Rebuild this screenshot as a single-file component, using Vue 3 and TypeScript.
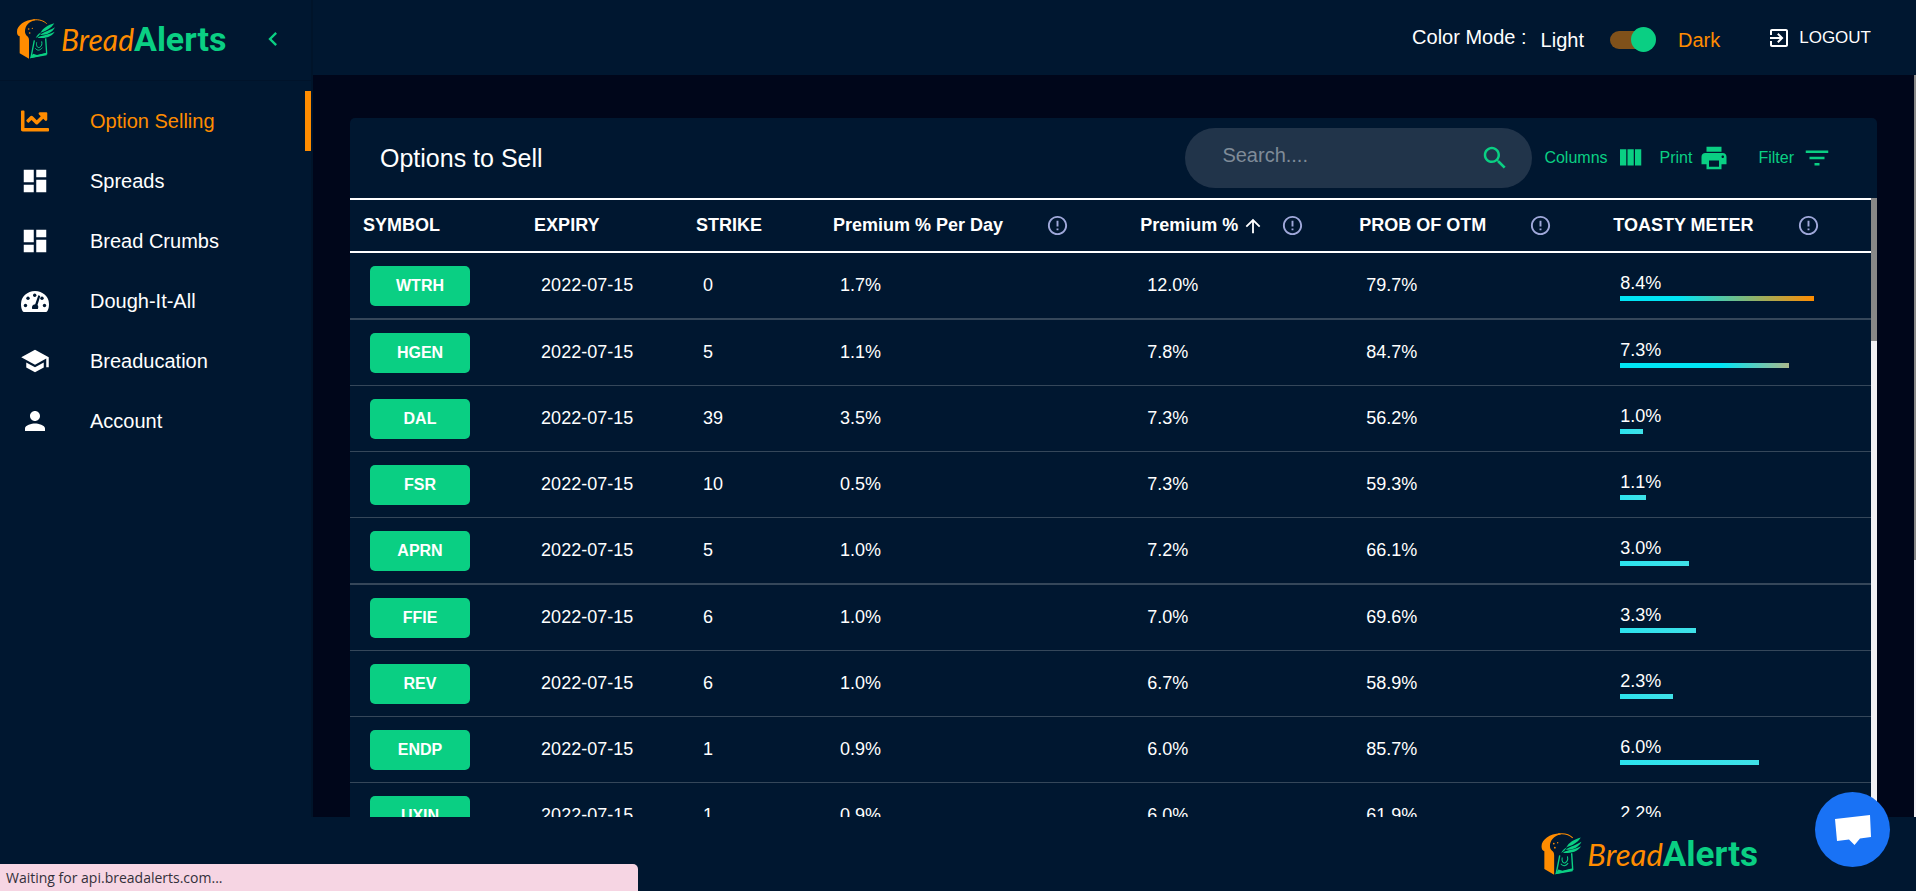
<script setup lang="ts">
import { ref, computed } from 'vue'

interface NavItem {
  label: string
  icon: 'chart' | 'dashboard' | 'gauge' | 'school' | 'person'
}

interface OptionRow {
  symbol: string
  expiry: string
  strike: number
  perDay: string
  premium: string
  prob: string
  meter: number
}

interface Column {
  key: string
  label: string
  info: boolean
  sorted?: boolean
}

const navItems: NavItem[] = [
  { label: 'Option Selling', icon: 'chart' },
  { label: 'Spreads', icon: 'dashboard' },
  { label: 'Bread Crumbs', icon: 'dashboard' },
  { label: 'Dough-It-All', icon: 'gauge' },
  { label: 'Breaducation', icon: 'school' },
  { label: 'Account', icon: 'person' },
]

const columns: Column[] = [
  { key: 'symbol', label: 'SYMBOL', info: false },
  { key: 'expiry', label: 'EXPIRY', info: false },
  { key: 'strike', label: 'STRIKE', info: false },
  { key: 'per-day', label: 'Premium % Per Day', info: true },
  { key: 'premium', label: 'Premium %', info: true, sorted: true },
  { key: 'prob', label: 'PROB OF OTM', info: true },
  { key: 'meter', label: 'TOASTY METER', info: true },
]

const rows: OptionRow[] = [
  { symbol: 'WTRH', expiry: '2022-07-15', strike: 0, perDay: '1.7%', premium: '12.0%', prob: '79.7%', meter: 8.4 },
  { symbol: 'HGEN', expiry: '2022-07-15', strike: 5, perDay: '1.1%', premium: '7.8%', prob: '84.7%', meter: 7.3 },
  { symbol: 'DAL', expiry: '2022-07-15', strike: 39, perDay: '3.5%', premium: '7.3%', prob: '56.2%', meter: 1.0 },
  { symbol: 'FSR', expiry: '2022-07-15', strike: 10, perDay: '0.5%', premium: '7.3%', prob: '59.3%', meter: 1.1 },
  { symbol: 'APRN', expiry: '2022-07-15', strike: 5, perDay: '1.0%', premium: '7.2%', prob: '66.1%', meter: 3.0 },
  { symbol: 'FFIE', expiry: '2022-07-15', strike: 6, perDay: '1.0%', premium: '7.0%', prob: '69.6%', meter: 3.3 },
  { symbol: 'REV', expiry: '2022-07-15', strike: 6, perDay: '1.0%', premium: '6.7%', prob: '58.9%', meter: 2.3 },
  { symbol: 'ENDP', expiry: '2022-07-15', strike: 1, perDay: '0.9%', premium: '6.0%', prob: '85.7%', meter: 6.0 },
  { symbol: 'UXIN', expiry: '2022-07-15', strike: 1, perDay: '0.9%', premium: '6.0%', prob: '61.9%', meter: 2.2 },
]

const active = ref('Option Selling')
const dark = ref(true)
const search = ref('')

const visibleRows = computed(() =>
  rows.filter((r) => r.symbol.toLowerCase().includes(search.value.trim().toLowerCase())),
)

function heat(value: number): string {
  if (value >= 8) return 'hot'
  if (value >= 7) return 'warm'
  return 'mild'
}
</script>

<template>
  <div class="app">
    <svg class="sprite" aria-hidden="true">
      <symbol id="loaf" viewBox="0 0 116 120">
        <path fill="#ff8c00" d="M54 1C24 2 1 20 1 38c0 8 2 12 8 14v51l28 16V64c0-7-2-10-6-13-4-4-6-8-6-14C25 22 36 7 56 4z" />
        <path fill="none" stroke="#ff8c00" stroke-width="3" d="M48 3c20-3 34 3 42 11" />
        <circle cx="36" cy="30" r="2.5" fill="#ff8c00" />
        <circle cx="47" cy="28" r="2" fill="#ff8c00" />
        <circle cx="39" cy="42" r="2.5" fill="#ff8c00" />
        <g fill="#0acf83">
          <path d="M113 13C94 18 78 28 72 41c16-5 31-12 41-28z" />
          <path d="M115 25C102 34 82 38 70 48c18 1 37-6 45-23z" />
          <path d="M114 38C102 45 86 47 74 51c-5 1-9 3-12 6 18 1 42-1 52-19z" />
          <path d="M74 40C67 44 61 49 57 57l9-6z" />
        </g>
        <path fill="none" stroke="#0acf83" stroke-width="4" d="M53 64 43 115l47-11-3-46" />
        <path fill="none" stroke="#0acf83" stroke-width="3" d="M60 70c-2 10 2 18 9 15 6-3 8-9 6-18M56 88c6 8 14 7 21-2" />
        <path fill="#0acf83" d="M40 118l9-14 12 4 29-7v8z" />
      </symbol>
      <symbol id="info" viewBox="0 0 24 24">
        <path d="M11 15h2v2h-2zm0-8h2v6h-2zm.99-5C6.47 2 2 6.48 2 12s4.47 10 9.99 10C17.52 22 22 17.52 22 12S17.52 2 11.99 2zM12 20c-4.42 0-8-3.58-8-8s3.58-8 8-8 8 3.58 8 8-3.58 8-8 8z" />
      </symbol>
      <symbol id="chart" viewBox="-18 -18 548 548">
        <path d="M496 384H64V80c0-8.84-7.16-16-16-16H16C7.16 64 0 71.16 0 80v336c0 17.67 14.33 32 32 32h464c8.84 0 16-7.16 16-16v-32c0-8.84-7.16-16-16-16zM464 96H345.94c-21.38 0-32.09 25.85-16.97 40.97l32.4 32.4L288 242.75l-73.37-73.37c-12.5-12.5-32.76-12.5-45.25 0l-68.69 68.69c-6.25 6.25-6.25 16.38 0 22.63l22.62 22.62c6.25 6.25 16.38 6.25 22.63 0L192 237.25l73.37 73.37c12.5 12.5 32.76 12.5 45.25 0l96-96 32.4 32.4c15.12 15.12 40.97 4.41 40.97-16.97V112c.01-8.84-7.15-16-15.99-16z" />
      </symbol>
      <symbol id="dashboard" viewBox="0 0 24 24">
        <path d="M3 13h8V3H3v10zm0 8h8v-6H3v6zm10 0h8V11h-8v10zm0-18v6h8V3h-8z" />
      </symbol>
      <symbol id="gauge" viewBox="0 0 30 30">
        <path d="M1 18a14 13 0 0 1 28 0c0 3-.5 5-1.6 7q-.5 1-1.5 1H4q-1 0-1.5-1C1.500 23 1 21 1 18z" />
        <g fill="#001730">
          <circle cx="5.500" cy="19.500" r="1.700" />
          <circle cx="8" cy="12.200" r="1.700" />
          <circle cx="14.700" cy="9.300" r="1.700" />
          <circle cx="22" cy="12.200" r="1.700" />
          <circle cx="24.500" cy="19.500" r="1.700" />
          <path d="M18.300 9.300l2 .6-2.800 9c1 1 1 2.600.3 4.100h-5.600c-.8-2.400.3-4.400 3-4.700z" />
        </g>
      </symbol>
      <symbol id="school" viewBox="0 0 24 24">
        <path d="M5 13.180v4L12 21l7-3.820v-4L12 17l-7-3.820zM12 3L1 9l11 6 9-4.910V17h2V9L12 3z" />
      </symbol>
      <symbol id="person" viewBox="0 0 24 24">
        <path d="M12 12c2.210 0 4-1.790 4-4s-1.790-4-4-4-4 1.790-4 4 1.790 4 4 4zm0 2c-2.670 0-8 1.340-8 4v2h16v-2c0-2.660-5.330-4-8-4z" />
      </symbol>
    </svg>

    <div class="upper">
      <aside class="sidebar">
        <div class="brand-row">
          <a href="#" class="brand" aria-label="BreadAlerts">
            <svg class="loaf"><use href="#loaf" /></svg>
            <span class="wordmark"><span class="bread">Bread</span><span class="alerts">Alerts</span></span>
          </a>
          <button type="button" class="collapse" aria-label="Collapse menu">
            <svg viewBox="0 0 24 24"><path d="M15.410 7.410L14 6l-6 6 6 6 1.410-1.410L10.830 12z" /></svg>
          </button>
        </div>
        <nav class="nav">
          <a
            v-for="item in navItems"
            :key="item.label"
            href="#"
            class="nav-item"
            :class="{ active: active === item.label }"
            @click.prevent="active = item.label"
          >
            <svg><use :href="'#' + item.icon" /></svg>
            <span>{{ item.label }}</span>
          </a>
        </nav>
      </aside>

      <div class="content">
        <header class="topbar">
          <span class="mode-title">Color Mode :</span>
          <label class="mode">
            <span>Light</span>
            <input v-model="dark" type="checkbox" class="switch" role="switch" aria-label="Dark mode" />
            <span class="mode-dark">Dark</span>
          </label>
          <button type="button" class="logout">
            <svg viewBox="0 0 24 24"><path d="M10.090 15.590L11.500 17l5-5-5-5-1.410 1.410L12.670 11H3v2h9.670l-2.580 2.590zM19 3H5c-1.110 0-2 .9-2 2v4h2V5h14v14H5v-4H3v4c0 1.100.89 2 2 2h14c1.100 0 2-.9 2-2V5c0-1.100-.9-2-2-2z" /></svg>
            <span>LOGOUT</span>
          </button>
        </header>

        <div class="page">
          <main class="main">
            <section class="card">
              <div class="toolbar">
                <h1>Options to Sell</h1>
                <div class="search">
                  <input v-model="search" type="text" placeholder="Search...." aria-label="Search" />
                  <button type="button" aria-label="Search">
                    <svg viewBox="0 0 24 24"><path d="M15.500 14h-.79l-.28-.27C15.410 12.590 16 11.110 16 9.500 16 5.910 13.090 3 9.500 3S3 5.910 3 9.500 5.910 16 9.500 16c1.610 0 3.090-.59 4.230-1.570l.27.28v.79l5 4.990L20.490 19l-4.990-5zm-6 0C7.010 14 5 11.990 5 9.500S7.010 5 9.500 5 14 7.010 14 9.500 11.990 14 9.500 14z" /></svg>
                  </button>
                </div>
                <button type="button" class="tool">
                  <span>Columns</span>
                  <svg viewBox="0 0 24 24"><path d="M10 18h5V5h-5v13zm-6 0h5V5H4v13zM16 5v13h5V5h-5z" /></svg>
                </button>
                <button type="button" class="tool print">
                  <span>Print</span>
                  <svg viewBox="0 0 24 24"><path d="M19 8H5c-1.660 0-3 1.340-3 3v6h4v4h12v-4h4v-6c0-1.660-1.340-3-3-3zm-3 11H8v-5h8v5zm3-7c-.55 0-1-.45-1-1s.45-1 1-1 1 .45 1 1-.45 1-1 1zm-1-9H6v4h12V3z" /></svg>
                </button>
                <button type="button" class="tool filter">
                  <span>Filter</span>
                  <svg viewBox="0 0 24 24"><path d="M10 18h4v-2h-4v2zM3 6v2h18V6H3zm3 7h12v-2H6v2z" /></svg>
                </button>
              </div>

              <div class="table-area">
                <div class="table-wrap">
                  <table>
                    <colgroup>
                      <col v-for="col in columns" :key="col.key" :class="'col-' + col.key" />
                    </colgroup>
                    <thead>
                      <tr>
                        <th v-for="col in columns" :key="col.key" scope="col">
                          <div class="head">
                            <span>{{ col.label }}</span>
                            <svg v-if="col.sorted" class="arrow" viewBox="0 0 24 24"><path d="M4 12l1.410 1.410L11 7.830V20h2V7.830l5.580 5.590L20 12l-8-8-8 8z" /></svg>
                            <button v-if="col.info" type="button" class="info" :class="{ near: col.sorted }" :aria-label="'About ' + col.label">
                              <svg><use href="#info" /></svg>
                            </button>
                          </div>
                        </th>
                      </tr>
                    </thead>
                    <tbody>
                      <tr v-for="row in visibleRows" :key="row.symbol">
                        <td><button type="button" class="symbol">{{ row.symbol }}</button></td>
                        <td>{{ row.expiry }}</td>
                        <td>{{ row.strike }}</td>
                        <td>{{ row.perDay }}</td>
                        <td>{{ row.premium }}</td>
                        <td>{{ row.prob }}</td>
                        <td>
                          <div class="meter">{{ row.meter.toFixed(1) }}%</div>
                          <div class="bar" :class="heat(row.meter)" :style="{ width: row.meter * 10 + '%' }"></div>
                        </td>
                      </tr>
                    </tbody>
                  </table>
                </div>
                <div class="track inner"><div class="thumb"></div></div>
              </div>
            </section>
          </main>
          <div class="track outer"><div class="thumb"></div></div>
        </div>
      </div>
    </div>

    <footer class="footer">
      <a href="#" class="brand" aria-label="BreadAlerts">
        <svg class="loaf"><use href="#loaf" /></svg>
        <span class="wordmark"><span class="bread">Bread</span><span class="alerts">Alerts</span></span>
      </a>
    </footer>

    <button type="button" class="chat" aria-label="Open chat">
      <svg viewBox="0 0 38 32"><path fill="#fff" d="M1 5l35-4 1 22-11 1.500L20.500 31 15 25.500 3 27z" /></svg>
    </button>
    <div class="status" role="status">Waiting for api.breadalerts.com...</div>
  </div>
</template>

<style>
body {
  margin: 0;
  background: #001730;
}
</style>

<style scoped>
.app {
  --navy: #001730;
  --green: #0acf83;
  --orange: #ff8c00;
  position: relative;
  display: flex;
  flex-direction: column;
  height: 100vh;
  overflow: hidden;
  background: var(--navy);
  color: #fff;
  font-family: "Liberation Sans", Arial, sans-serif;
  font-size: 18px;
}
.app *,
.app *::before {
  box-sizing: border-box;
}
button {
  padding: 0;
  border: 0;
  background: none;
  color: inherit;
  font: inherit;
  cursor: pointer;
}
a {
  color: inherit;
  text-decoration: none;
}
svg {
  display: block;
  flex: none;
  fill: currentColor;
}
.sprite {
  position: absolute;
  width: 0;
  height: 0;
}
.upper {
  display: flex;
  flex: 1;
  min-height: 0;
}
.sidebar {
  flex: none;
  width: 313px;
  border-right: 2px solid #00142a;
}
.brand-row {
  display: flex;
  align-items: center;
  justify-content: space-between;
  height: 81px;
  padding: 0 24px 2px 16px;
  border-bottom: 1px solid #00132a;
}
.brand {
  display: flex;
  align-items: center;
}
.loaf {
  width: 40px;
  height: 40px;
  margin-right: 5px;
}
.wordmark {
  display: flex;
  align-items: baseline;
  line-height: 40px;
}
.bread {
  color: var(--orange);
  font-family: Lato, sans-serif;
  font-size: 30px;
  font-style: italic;
}
.alerts {
  color: var(--green);
  font-family: Roboto, sans-serif;
  font-size: 34px;
  font-weight: 700;
}
.collapse svg {
  width: 28px;
  height: 28px;
  color: var(--green);
}
.nav {
  padding-top: 10px;
}
.nav-item {
  display: flex;
  align-items: center;
  gap: 40px;
  height: 60px;
  padding-left: 20px;
  font-size: 20px;
}
.nav-item svg {
  width: 30px;
  height: 30px;
}
.nav-item.active {
  border-right: 6px solid var(--orange);
  color: var(--orange);
}
.content {
  display: flex;
  flex: 1;
  flex-direction: column;
  min-width: 0;
}
.topbar {
  display: flex;
  flex: none;
  align-items: center;
  justify-content: flex-end;
  height: 75px;
  padding-right: 45px;
  font-size: 20px;
}
.mode {
  display: flex;
  align-items: center;
  margin-left: 14px;
  padding-top: 5px;
}
.switch {
  position: relative;
  width: 46px;
  height: 26px;
  margin: 0 22px 0 26px;
  appearance: none;
  cursor: pointer;
}
.switch::before {
  content: "";
  display: block;
  height: 18px;
  margin: 4px 4px 4px 0;
  border-radius: 9px;
  background: #80511a;
}
.switch::after {
  content: "";
  position: absolute;
  top: 0;
  left: 0;
  width: 25px;
  height: 25px;
  border-radius: 50%;
  background: var(--green);
}
.switch:checked::after {
  right: 0;
  left: auto;
}
.mode-dark {
  color: var(--orange);
}
.logout {
  display: flex;
  align-items: center;
  gap: 8px;
  margin-left: 47px;
  font-size: 17px;
}
.logout svg {
  width: 24px;
  height: 24px;
}
.page {
  display: flex;
  flex: 1;
  min-height: 0;
  background: #00061a;
}
.main {
  display: flex;
  flex: 1;
  min-width: 0;
  padding: 43px 37px 0;
}
.card {
  display: flex;
  flex: 1;
  flex-direction: column;
  min-width: 0;
  overflow: hidden;
  border-radius: 5px 5px 0 0;
  background: var(--navy);
}
.toolbar {
  display: flex;
  flex: none;
  align-items: center;
  height: 80px;
  padding: 0 45px 0 30px;
}
h1 {
  margin: 0 auto 0 0;
  font-size: 25px;
  font-weight: 400;
}
.search {
  display: flex;
  align-items: center;
  width: 347px;
  height: 60px;
  padding: 0 22px 0 37px;
  border-radius: 30px;
  background: #21344a;
}
.search input {
  flex: 1;
  min-width: 0;
  padding: 0 0 6px;
  border: 0;
  outline: 0;
  background: none;
  color: #fff;
  font: inherit;
  font-size: 20px;
}
.search input::placeholder {
  color: #7f8b98;
  opacity: 1;
}
.search svg,
.tool svg {
  width: 30px;
  height: 30px;
  color: var(--green);
}
.tool {
  display: flex;
  align-items: center;
  gap: 7px;
  margin-left: 12px;
  color: var(--green);
  font-size: 16px;
}
.tool.print {
  margin-left: 15px;
}
.tool.filter {
  gap: 8px;
  margin-left: 29px;
}
.table-area {
  display: flex;
  flex: 1;
  min-height: 0;
}
.table-wrap {
  flex: 1;
  min-width: 0;
  overflow: hidden;
}
table {
  width: 100%;
  table-layout: fixed;
  border-collapse: separate;
  border-spacing: 0;
}
.col-symbol { width: 11.25%; }
.col-expiry { width: 10.65%; }
.col-strike { width: 9%; }
.col-per-day { width: 20.2%; }
.col-premium { width: 14.4%; }
.col-prob { width: 16.7%; }
.col-meter { width: 17.8%; }
th {
  height: 55px;
  padding: 0 0 0 13px;
  border-top: 2px solid #fff;
  border-bottom: 2px solid #fff;
  font-weight: 700;
  text-align: left;
  white-space: nowrap;
}
.head {
  display: flex;
  align-items: center;
}
.arrow {
  width: 22px;
  height: 22px;
  margin-left: 4px;
}
.info {
  margin-left: 43px;
  color: #9fa8da;
}
.info.near {
  margin-left: 17px;
}
.info svg {
  width: 23px;
  height: 23px;
}
td {
  height: 66px;
  padding: 0 20px;
  border-bottom: 1px solid #35475a;
}
tr:nth-child(4n + 1) td {
  height: 67px;
  border-bottom-width: 2px;
}
.symbol {
  display: block;
  width: 100px;
  height: 40px;
  border-radius: 5px;
  background: var(--green);
  font-size: 16px;
  font-weight: 700;
}
.meter {
  line-height: 26px;
}
.bar {
  height: 5px;
}
.bar.hot {
  background: linear-gradient(90deg, #00e5f5 30%, #ff8c00);
}
.bar.warm {
  background: linear-gradient(90deg, #00e5f5 60%, #abb88c);
}
.bar.mild {
  background: linear-gradient(90deg, #2be3ee, #3fe1e8);
}
.track {
  flex: none;
  background: #f1f1f4;
}
.track.inner {
  width: 6px;
}
.track.outer {
  width: 2px;
}
.thumb {
  background: #888;
}
.inner .thumb {
  height: 143px;
}
.outer .thumb {
  height: 485px;
}
.footer {
  display: flex;
  flex: none;
  align-items: center;
  justify-content: flex-end;
  height: 74px;
  padding-right: 158px;
}
.footer .loaf {
  width: 41px;
  height: 42px;
}
.footer .bread {
  font-size: 31px;
}
.footer .alerts {
  font-size: 35px;
}
.chat {
  position: absolute;
  right: 26px;
  bottom: 24px;
  display: flex;
  align-items: center;
  justify-content: center;
  width: 75px;
  height: 75px;
  border-radius: 50%;
  background: #1972f5;
}
.chat svg {
  width: 38px;
  height: 32px;
}
.status {
  position: absolute;
  bottom: 0;
  left: 0;
  width: 638px;
  height: 27px;
  padding-left: 6px;
  border-radius: 0 5px 0 0;
  background: #f6d5e3;
  color: #33303a;
  font-family: "Open Sans", "Noto Sans", sans-serif;
  font-size: 14px;
  line-height: 27px;
}
</style>
